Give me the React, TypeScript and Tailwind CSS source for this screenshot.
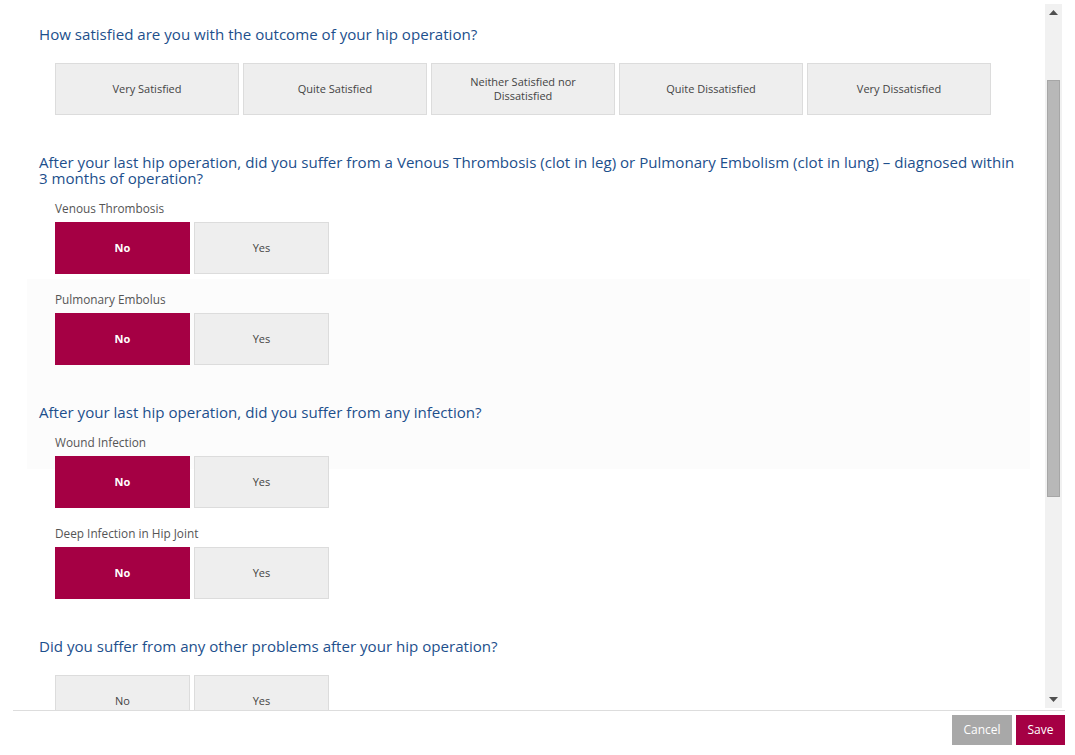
import React from 'react';

const heading = "text-[15.1px] leading-4 text-[#1d4f8c]";
const label = "text-[11.8px] leading-4 text-[#555555]";

function Choice({ text, selected }: { text: string; selected?: boolean }) {
  return (
    <div
      className={
        selected
          ? "w-[135px] h-[52px] flex items-center justify-center bg-[#a50044] text-white font-bold text-[11px]"
          : "w-[135px] h-[52px] flex items-center justify-center bg-[#eeeeee] border border-[#dcdcdc] text-[#444444] text-[11px]"
      }
    >
      {text}
    </div>
  );
}

function YesNo({ title, value }: { title?: string; value?: 'No' | 'Yes' }) {
  return (
    <div className="pl-4">
      {title && <div className={label}>{title}</div>}
      <div className={title ? "mt-[6px] flex gap-1" : "flex gap-1"}>
        <Choice text="No" selected={value === 'No'} />
        <Choice text="Yes" selected={value === 'Yes'} />
      </div>
    </div>
  );
}

const satisfaction = [
  'Very Satisfied',
  'Quite Satisfied',
  'Neither Satisfied nor Dissatisfied',
  'Quite Dissatisfied',
  'Very Dissatisfied',
];

export default function App() {
  return (
    <div className="w-[1075px] h-[755px] bg-white overflow-hidden font-['Open_Sans',sans-serif]">
      <div className="flex h-[710px] px-[13px]">
        <div className="relative flex-1 overflow-hidden pl-[26px] pt-[26px]">
          <div className="absolute left-[14px] top-[279px] w-[1003px] h-[190px] bg-[#fcfcfc]" />
          <div className="relative">
            <h2 className={heading}>How satisfied are you with the outcome of your hip operation?</h2>
            <div className="mt-[21px] pl-4 flex gap-1">
              {satisfaction.map((s) => (
                <div
                  key={s}
                  className="w-[184px] h-[52px] flex items-center justify-center text-center px-8 bg-[#eeeeee] border border-[#dcdcdc] text-[#444444] text-[11px] leading-[14px]"
                >
                  {s}
                </div>
              ))}
            </div>

            <h2 className={heading + " mt-[39px] w-[980px]"}>
              After your last hip operation, did you suffer from a Venous Thrombosis (clot in leg) or Pulmonary Embolism (clot in lung) – diagnosed within 3 months of operation?
            </h2>
            <div className="mt-[14px]">
              <YesNo title="Venous Thrombosis" value="No" />
            </div>
            <div className="mt-[17px]">
              <YesNo title="Pulmonary Embolus" value="No" />
            </div>

            <h2 className={heading + " mt-[39px]"}>After your last hip operation, did you suffer from any infection?</h2>
            <div className="mt-[14px]">
              <YesNo title="Wound Infection" value="No" />
            </div>
            <div className="mt-[17px]">
              <YesNo title="Deep Infection in Hip Joint" value="No" />
            </div>

            <h2 className={heading + " mt-[39px]"}>Did you suffer from any other problems after your hip operation?</h2>
            <div className="mt-[21px]">
              <YesNo />
            </div>
          </div>
        </div>

        <div className="w-[17px] mt-1 mb-[2px] bg-[#f1f1f1] flex flex-col items-center">
          <div className="h-[17px] flex items-center justify-center">
            <svg width="9" height="5" viewBox="0 0 9 5"><path d="M0 5 L4.5 0 L9 5 Z" fill="#505050" /></svg>
          </div>
          <div className="mt-[59px] w-[13px] h-[417px] bg-[#b8b8b8] border border-[#a6a6a6]" />
          <div className="flex-1" />
          <div className="h-[17px] flex items-center justify-center">
            <svg width="9" height="5" viewBox="0 0 9 5"><path d="M0 0 L9 0 L4.5 5 Z" fill="#505050" /></svg>
          </div>
        </div>
      </div>

      <div className="ml-[13px] mr-[10px] border-t border-[#dddddd] pt-[4px] flex justify-end gap-1">
        <button className="h-[30px] w-[60px] bg-[#a8a8a8] text-white text-[12px]">Cancel</button>
        <button className="h-[30px] w-[49px] bg-[#a50044] text-white text-[12px]">Save</button>
      </div>
    </div>
  );
}
